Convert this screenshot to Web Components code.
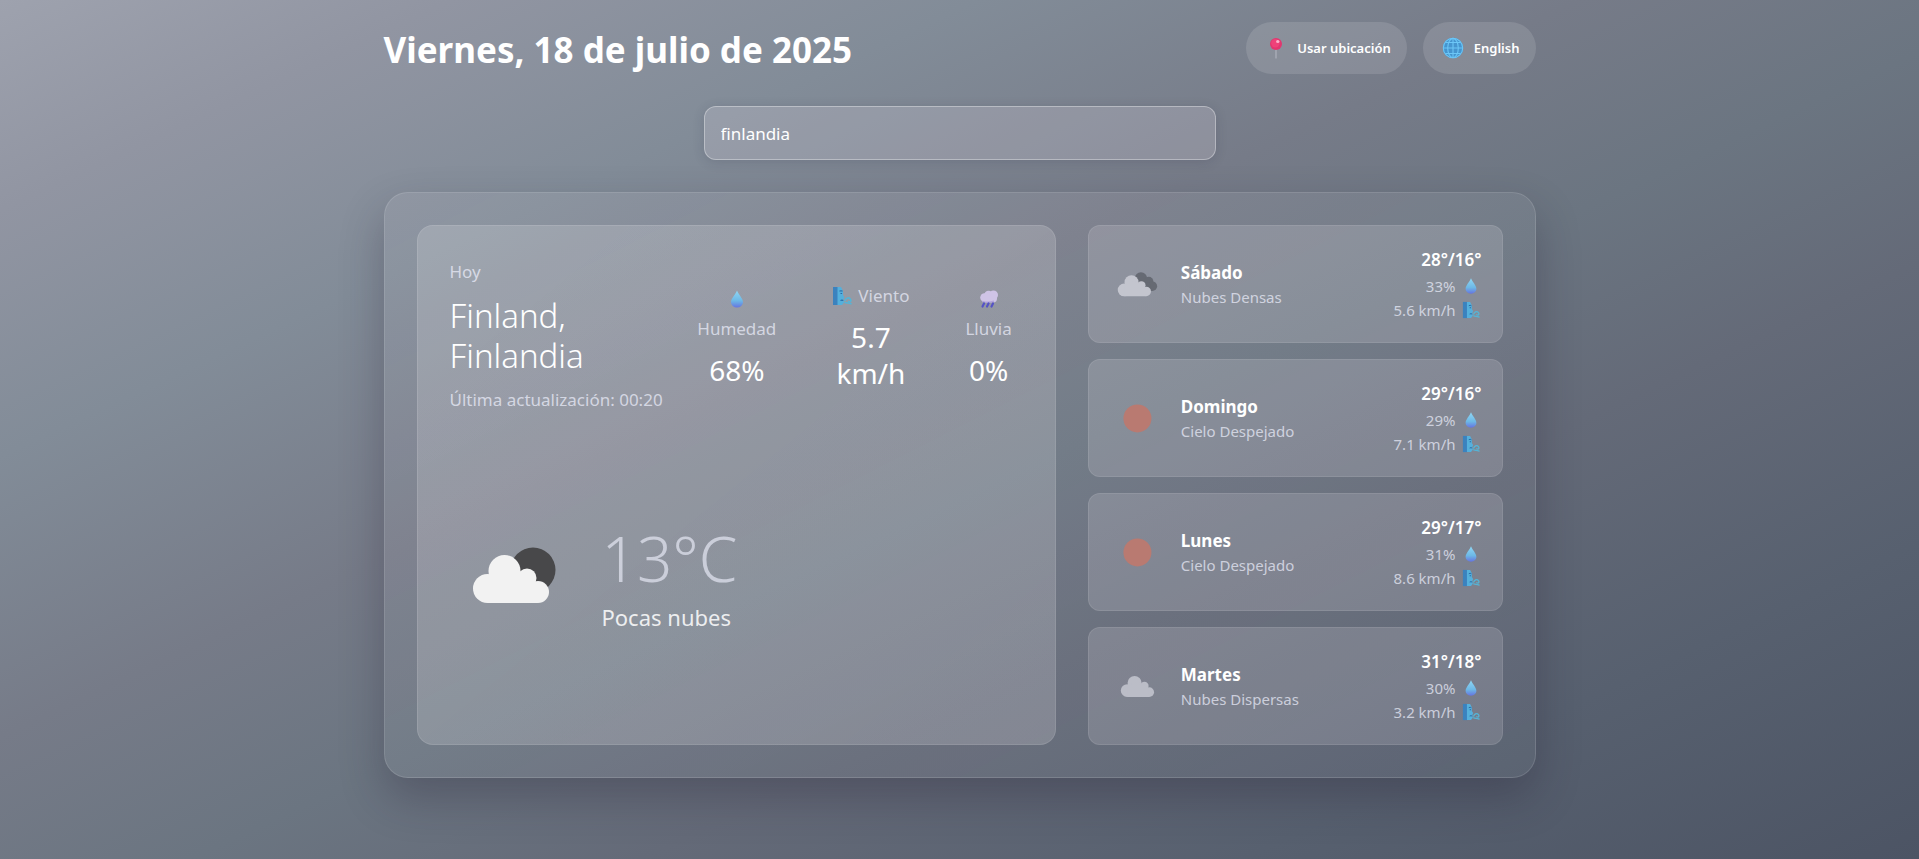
<!DOCTYPE html>
<html lang="es">
<head>
<meta charset="utf-8">
<meta name="viewport" content="width=device-width, initial-scale=1">
<title>El tiempo</title>
<style>
  html, body { margin: 0; }
  body {
    font-family: "Noto Sans", "Open Sans", sans-serif;
    font-size: 17px;
    color: #fff;
    --soft: rgba(240, 242, 255, .7);
    --glass: rgba(255, 250, 255, .15);
  }
</style>
</head>
<body>
<weather-app></weather-app>

<template id="weather-app">
  <style>
    :host {
      display: block;
      box-sizing: border-box;
      min-height: 100vh;
      padding: 22px 24px 32px;
      background: linear-gradient(155deg,
        #9ea2ae 0%, #9195a2 12%, #828c98 26%, #767b88 42%,
        #6b7581 54%, #646a78 66%, #57606f 82%, #4c5464 100%);
    }
    main {
      display: flex;
      flex-direction: column;
      gap: 32px;
      max-width: 1152px;
      margin: 0 auto;
    }
    .panel {
      display: grid;
      grid-template-columns: 37fr 24fr;
      gap: 32px;
      padding: 32px;
      border: 1px solid rgba(255, 255, 255, .12);
      border-radius: 24px;
      background: linear-gradient(to bottom right, rgba(255, 245, 255, .08), rgba(255, 245, 255, .04));
      box-shadow: 0 20px 44px rgba(35, 30, 50, .3);
    }
    .days { display: grid; gap: 16px; }
  </style>
  <main>
    <page-header>
      <span slot="title">Viernes, 18 de julio de 2025</span>
      <pill-button icon="pin">Usar ubicación</pill-button>
      <pill-button icon="globe">English</pill-button>
    </page-header>
    <city-search value="finlandia"></city-search>
    <section class="panel">
      <today-card></today-card>
      <div class="days">
        <day-card icon="dense" day="Sábado" sky="Nubes Densas" temp="28°/16°" humidity="33%" wind="5.6 km/h"></day-card>
        <day-card icon="sun" day="Domingo" sky="Cielo Despejado" temp="29°/16°" humidity="29%" wind="7.1 km/h"></day-card>
        <day-card icon="sun" day="Lunes" sky="Cielo Despejado" temp="29°/17°" humidity="31%" wind="8.6 km/h"></day-card>
        <day-card icon="cloud" day="Martes" sky="Nubes Dispersas" temp="31°/18°" humidity="30%" wind="3.2 km/h"></day-card>
      </div>
    </section>
  </main>
</template>

<template id="page-header">
  <style>
    :host { display: block; }
    header { display: flex; align-items: center; justify-content: space-between; gap: 16px; flex-wrap: wrap; }
    h1 { margin: 0; padding-top: 4px; font-size: 35px; line-height: 48px; font-weight: 700; }
    nav { display: flex; gap: 16px; }
  </style>
  <header>
    <h1><slot name="title"></slot></h1>
    <nav><slot></slot></nav>
  </header>
</template>

<template id="pill-button">
  <style>
    :host { display: block; }
    button {
      display: flex;
      align-items: center;
      gap: 7px;
      height: 52px;
      padding: 0 16px;
      border: 0;
      border-radius: 26px;
      background: rgba(255, 255, 255, .12);
      color: inherit;
      font: inherit;
      font-size: 13px;
      font-weight: 600;
      cursor: pointer;
    }
    w-icon { width: 28px; height: 28px; }
  </style>
  <button type="button"><w-icon></w-icon><slot></slot></button>
</template>

<template id="city-search">
  <style>
    :host { display: block; width: 100%; max-width: 512px; margin: 0 auto; }
    input {
      display: block;
      box-sizing: border-box;
      width: 100%;
      height: 54px;
      padding: 0 16px;
      border: 1px solid rgba(255, 255, 255, .34);
      border-radius: 12px;
      background: rgba(255, 245, 255, .17);
      box-shadow: 0 2px 12px rgba(40, 40, 60, .16);
      color: inherit;
      font: inherit;
      outline: 0;
    }
  </style>
  <input type="text" aria-label="Buscar ciudad">
</template>

<template id="today-card">
  <style>
    :host {
      display: flex;
      flex-direction: column;
      gap: 24px;
      box-sizing: border-box;
      padding: 32px;
      border: 1px solid rgba(255, 255, 255, .1);
      border-radius: 16px;
      background: linear-gradient(to bottom right, rgba(255, 255, 255, .17), rgba(255, 250, 255, .18));
    }
    .top { display: flex; align-items: center; justify-content: space-between; gap: 24px; }
    .place { display: flex; flex-direction: column; gap: 10px; width: 212px; }
    p, h2 { margin: 0; }
    .place p { line-height: 28px; color: var(--soft); white-space: nowrap; }
    h2 { font-size: 33px; line-height: 40px; font-weight: 300; }
    .stats { display: flex; align-items: center; gap: 56px; padding-right: 11px; }
    .now { flex: 1; display: flex; align-items: center; gap: 24px; }
    .now w-icon { width: 128px; height: 128px; }
    .temp { font-size: 62px; line-height: 84px; font-weight: 300; color: rgba(240, 242, 255, .62); }
    .sky { font-size: 22px; line-height: 34px; color: rgba(255, 255, 255, .86); }
  </style>
  <div class="top">
    <div class="place">
      <p>Hoy</p>
      <h2>Finland, Finlandia</h2>
      <p>Última actualización: 00:20</p>
    </div>
    <div class="stats">
      <weather-stat icon="drop" label="Humedad">68%</weather-stat>
      <weather-stat icon="wind" label="Viento" inline>5.7<br>km/h</weather-stat>
      <weather-stat icon="rain" label="Lluvia">0%</weather-stat>
    </div>
  </div>
  <div class="now">
    <w-icon name="partly"></w-icon>
    <div>
      <p class="temp">13°C</p>
      <p class="sky">Pocas nubes</p>
    </div>
  </div>
</template>

<template id="weather-stat">
  <style>
    :host { display: flex; flex-direction: column; align-items: center; gap: 8px; text-align: center; }
    .label { display: flex; flex-direction: column; align-items: center; line-height: 30px; color: var(--soft); }
    :host([inline]) .label { flex-direction: row; gap: 6px; }
    w-icon { width: 20px; height: 30px; }
    .value { font-size: 28px; line-height: 36px; }
  </style>
  <div class="label"><w-icon></w-icon><span></span></div>
  <div class="value"><slot></slot></div>
</template>

<template id="day-card">
  <style>
    :host {
      display: flex;
      align-items: center;
      gap: 16px;
      box-sizing: border-box;
      padding: 20px;
      border: 1px solid rgba(255, 255, 255, .09);
      border-radius: 12px;
      background: var(--glass);
    }
    .pic { width: 56px; height: 56px; }
    .text { flex: 1; padding-top: 2px; line-height: 25px; }
    h3, p { margin: 0; }
    h3 { font-size: 17px; font-weight: 700; }
    .text p, .row { font-size: 15px; color: var(--soft); }
    .data { text-align: right; }
    .temp { font-size: 17px; line-height: 28px; font-weight: 600; }
    .row { display: flex; align-items: center; justify-content: flex-end; gap: 4px; line-height: 24px; }
    .row w-icon { width: 22px; height: 18px; }
  </style>
  <w-icon class="pic"></w-icon>
  <div class="text"><h3></h3><p class="sky"></p></div>
  <div class="data">
    <p class="temp"></p>
    <p class="row"><span class="humidity"></span><w-icon name="drop"></w-icon></p>
    <p class="row"><span class="wind"></span><w-icon name="wind"></w-icon></p>
  </div>
</template>

<script>
  // Four round lobes over a flat base.
  const CLOUD = '<circle cx="37.5" cy="77.5" r="14.5"/><circle cx="54.5" cy="60" r="16"/><circle cx="77" cy="67" r="9.5"/><circle cx="88" cy="81" r="11"/><path d="M38 92V66l22-8 16 6 10 10 2 18Z"/>';

  const ICONS = {
    pin: ['0 0 28 28',
      '<path d="M13.3 14h1.4v10l-.7 1-.7-1Z" fill="#a9adb8"/><circle cx="14" cy="10" r="6" fill="#e2366f"/><circle cx="13.4" cy="9.2" r="4.2" fill="#ee4279"/><ellipse cx="15.8" cy="7.5" rx="1.7" ry="1.5" fill="#f9b3cb"/>'],
    globe: ['0 0 28 28',
      '<circle cx="14" cy="14" r="10.2" fill="#4595cf"/><g fill="none" stroke="#6cc6f6" stroke-width="1.1"><circle cx="14" cy="14" r="9.7"/><ellipse cx="14" cy="14" rx="5.3" ry="9.6"/><path d="M14 4.4v19.2M4.4 14h19.2M6.5 8.5h15M6.5 19.5h15"/></g>'],
    drop: ['0 0 20 20',
      '<defs><linearGradient id="d" x2="0" y2="1"><stop offset="0" stop-color="#8fd6f3"/><stop offset=".6" stop-color="#6db8e6"/><stop offset="1" stop-color="#6575e0"/></linearGradient></defs><path d="M10 1.5C8.500 5.500 4 9.500 4 13.200a6 5.300 0 0 0 12 0C16 9.500 11.500 5.500 10 1.500Z" fill="url(#d)"/>'],
    wind: ['0 0 20 20',
      '<path d="M1 1h5v18H1Z" fill="#3b82be"/><path d="M5.5 1H9l2 4v4l1.5 2.5-1 1.5.5 3.5-2 2.5H5.5Z" fill="#55b0dc"/><path d="M7.5 5.300q1.500-1.200 3 0M8.500 7.500h1.600M8.500 14.500q1.500-.8 2.800 0" fill="none" stroke="#2a6aa5" stroke-width="1.1"/><path d="M13 14.500c1-3 4-3.300 5.300-1.500s0 3.300-1.800 2.300M13 16.500c2 .8 3 .3 6 1.300" fill="none" stroke="#55b4d6" stroke-width="1.5" stroke-linecap="round"/>'],
    rain: ['0 0 20 20',
      '<g fill="#cfc4e6"><circle cx="5.5" cy="8.5" r="4.3"/><circle cx="9.5" cy="6" r="4.3"/><circle cx="14.5" cy="6" r="4.5"/><circle cx="14" cy="9.5" r="4"/><path d="M5.5 8h9v5h-9Z"/></g><path d="M3 12.300q6 2 12-.2" stroke="#b3a4dc" stroke-width="1.3" fill="none"/><path d="M5 14.500l-1.500 3M9.500 14.500l-1.500 3M14 14.500l-1.500 3" stroke="#5553c6" stroke-width="2.2" stroke-linecap="round"/>'],
    partly: ['0 0 128 128',
      '<circle cx="83" cy="59" r="22.5" fill="#48484a"/><g fill="#f2f2f2">' + CLOUD + '</g>'],
    cloud: ['0 0 128 128',
      '<g fill="#bbbdc7" transform="translate(4 -3)">' + CLOUD + '</g>'],
    dense: ['0 0 128 128',
      '<g fill="#666a73"><circle cx="73" cy="51" r="14"/><circle cx="91" cy="58" r="10.5"/><circle cx="99" cy="69" r="11"/><path d="M66 60h26l6 20H72Z"/></g><g fill="#c3c5ce" transform="translate(-3 0)">' + CLOUD + '</g>'],
    sun: ['0 0 128 128', '<circle cx="65" cy="65" r="32" fill="#b97a71"/>']
  };

  class Base extends HTMLElement {
    constructor() {
      super();
      const template = document.getElementById(this.localName);
      this.attachShadow({ mode: 'open' }).append(template.content.cloneNode(true));
    }
    $(selector) { return this.shadowRoot.querySelector(selector); }
  }

  customElements.define('w-icon', class extends HTMLElement {
    static observedAttributes = ['name'];
    constructor() { super(); this.attachShadow({ mode: 'open' }); }
    attributeChangedCallback() {
      const [box, body] = ICONS[this.getAttribute('name')];
      this.shadowRoot.innerHTML =
        '<style>:host{display:block;flex:none}svg{display:block;width:100%;height:100%}</style>' +
        `<svg viewBox="${box}" aria-hidden="true">${body}</svg>`;
    }
  });

  customElements.define('pill-button', class extends Base {
    connectedCallback() { this.$('w-icon').setAttribute('name', this.getAttribute('icon')); }
  });

  customElements.define('page-header', class extends Base {});

  customElements.define('city-search', class extends Base {
    connectedCallback() { this.$('input').value = this.getAttribute('value') || ''; }
  });

  customElements.define('weather-stat', class extends Base {
    connectedCallback() {
      this.$('w-icon').setAttribute('name', this.getAttribute('icon'));
      this.$('.label span').textContent = this.getAttribute('label');
    }
  });

  customElements.define('day-card', class extends Base {
    connectedCallback() {
      this.$('.pic').setAttribute('name', this.getAttribute('icon'));
      this.$('h3').textContent = this.getAttribute('day');
      for (const key of ['sky', 'temp', 'humidity', 'wind']) {
        this.$('.' + key).textContent = this.getAttribute(key);
      }
    }
  });

  customElements.define('today-card', class extends Base {});
  customElements.define('weather-app', class extends Base {});
</script>
</body>
</html>
